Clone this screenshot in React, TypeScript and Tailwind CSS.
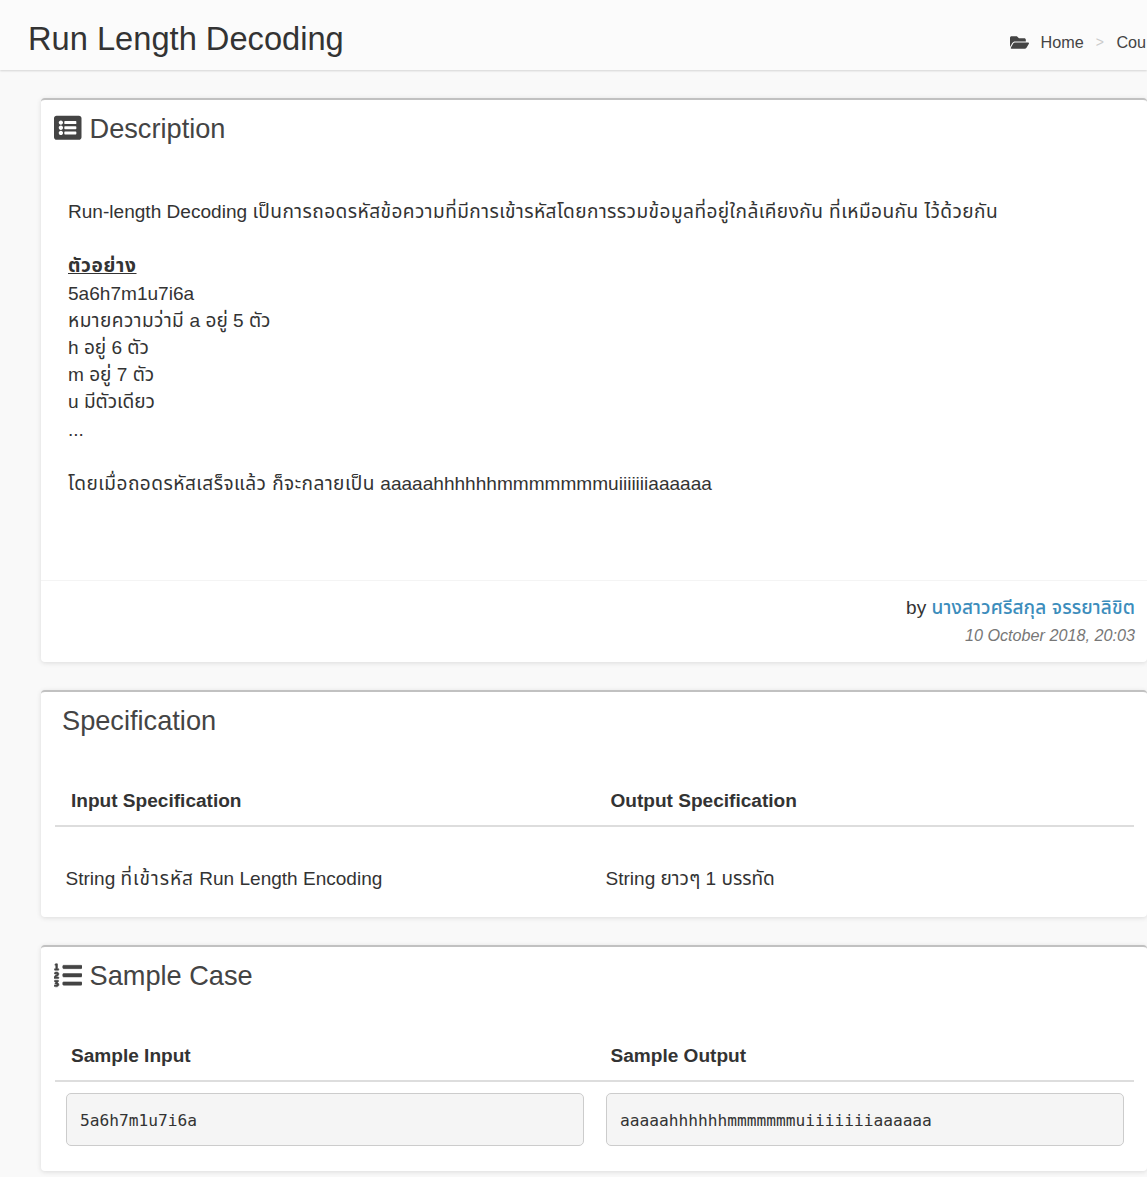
import React from "react";
import { FaFolderOpen, FaListAlt, FaListOl } from "react-icons/fa";

const card = "ml-[41px] mb-[28px] border-t-2 border-[#c1c1c1] rounded-[4px] bg-white shadow-[0_1px_5px_rgba(0,0,0,0.12)]";
const pre =
  "h-[53px] rounded-[5px] border border-[#ccc] bg-[#f5f5f5] pl-[13px] leading-[53px] font-['DejaVu_Sans_Mono',monospace] text-[16.2px]";

function Heading({ left, right }: { left: string; right: string }) {
  return (
    <div className="ml-[14px] mr-[13px] grid grid-cols-2 border-b-2 border-[#ddd] h-[53px] pt-[13px] text-[19.07px] leading-[27px] font-bold">
      <div className="pl-4">{left}</div>
      <div className="pl-4">{right}</div>
    </div>
  );
}

export default function App() {
  return (
    <div className="w-[1147px] h-[1177px] overflow-hidden bg-[#f9f9f9] text-[#333] font-['Liberation_Sans','Noto_Sans_Thai',sans-serif]">
      <header className="flex h-[70px] bg-[#fbfbfb] shadow-[0_1px_2px_rgba(0,0,0,0.15)] whitespace-nowrap mb-[28px]">
        <h1 className="pl-7 pt-[20px] text-[32.65px] leading-[38px] w-[1010px] shrink-0">Run Length Decoding</h1>
        <nav className="flex items-center pt-[15px] text-[16.2px] text-[#444]">
          <FaFolderOpen size={19} className="-mt-px" />
          <span className="ml-[11.5px]">Home</span>
          <span className="mx-3 text-[14px] text-[#ccc]">&gt;</span>
          <span className="ml-[0.5px]">Cou</span>
        </nav>
      </header>
      <section className={card + " h-[564px] flex flex-col"}>
        <h2 className="flex items-center pl-[13px] pt-[11px] text-[27.2px] leading-[35px] text-[#444]">
          <FaListAlt size={27.5} className="mr-[8px] -mt-[2px]" />Description
        </h2>
        <div className="text-[19.07px] pl-[27px] pt-[52px] leading-[27.2px] whitespace-nowrap grow">
          <p>Run-length Decoding <span className="tracking-[0.455px]">เป็นการถอดรหัสข้อความที่มีการเข้ารหัสโดยการรวมข้อมูลที่อยู่ใกล้เคียงกัน ที่เหมือนกัน ไว้ด้วยกัน</span></p>
          <br />
          <p className="font-bold underline"><span className="tracking-[0.65px]">ตัวอย่าง</span></p>
          <p>5a6h7m1u7i6a</p>
          <p><span className="tracking-[0.45px]">หมายความว่ามี</span> a อยู่ 5 ตัว</p>
          <p>h อยู่ 6 ตัว</p>
          <p>m อยู่ 7 ตัว</p>
          <p>u มีตัวเดียว</p>
          <p>...</p>
          <br />
          <p><span className="tracking-[0.48px]">โดยเมื่อถอดรหัสเสร็จแล้ว ก็จะกลายเป็น</span> aaaaahhhhhhmmmmmmmuiiiiiiiaaaaaa</p>
        </div>
        <footer className="h-[82px] border-t border-[#f4f4f4] pt-[13px] pr-3 text-right text-[19.05px] leading-[27px]">
          <p>by <span className="text-[#3c8dbc] font-medium tracking-[0.1px]">นางสาวศรีสกุล จรรยาลิขิต</span></p>
          <p className="pt-px text-[16.2px] italic text-[#777]">10 October 2018, 20:03</p>
        </footer>
      </section>
      <section className={card + " h-[227px]"}>
        <h2 className="pl-[21px] pt-[11px] pb-[36px] text-[27.2px] leading-[35px] text-[#444]">Specification</h2>
        <Heading left="Input Specification" right="Output Specification" />
        <div className="ml-[24.5px] mr-[1.5px] pt-[38px] grid grid-cols-2 text-[19.05px] leading-[27px]">
          <p>String <span className="tracking-[1px]">ที่เข้ารหัส</span> Run Length Encoding</p>
          <p>String ยาวๆ 1 บรรทัด</p>
        </div>
      </section>
      <section className={card + " h-[226px]"}>
        <h2 className="flex items-center pl-[13px] pt-[11px] pb-[36px] text-[27.2px] leading-[35px] text-[#444]">
          <FaListOl
            preserveAspectRatio="none"
            stroke="currentColor"
            strokeWidth={10}
            className="w-[28px] h-[26.5px] mr-[7.5px] shrink-0"
          />
          Sample Case
        </h2>
        <Heading left="Sample Input" right="Sample Output" />
        <div className="ml-[25px] mr-[23px] pt-[11px] grid grid-cols-2 gap-[22px]">
          <pre className={pre}>5a6h7m1u7i6a</pre>
          <pre className={pre}>aaaaahhhhhhmmmmmmmuiiiiiiiaaaaaa</pre>
        </div>
      </section>
    </div>
  );
}
